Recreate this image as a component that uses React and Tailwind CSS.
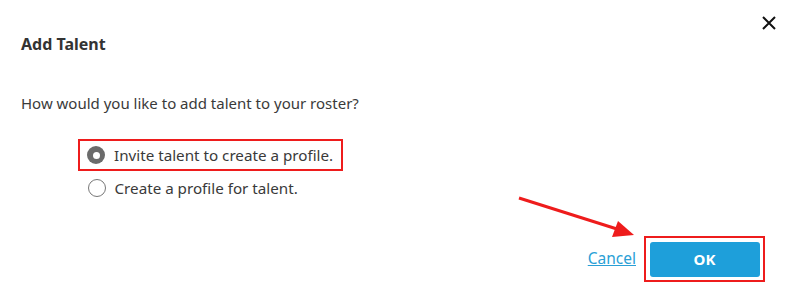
import React from "react";

export default function App() {
  return (
    <div
      className="relative w-[787px] h-[286px] bg-white text-[#3a3a3a] overflow-hidden"
      style={{ fontFamily: "'Noto Sans', sans-serif" }}
    >
      <div className="flex flex-col pl-[21px] pr-[22px] pt-[33px]">
        <div className="flex justify-between items-start">
          <h2 className="text-[16px] leading-[22px] font-bold text-[#333]">Add Talent</h2>
          <button className="-mt-[19px] -mr-[13px] w-[18px] h-[18px] flex items-center justify-center">
            <svg width="14" height="14" viewBox="0 0 14 14">
              <path d="M1 1 L13 13 M13 1 L1 13" stroke="#111" strokeWidth="2" />
            </svg>
          </button>
        </div>
        <p className="mt-[38px] text-[15px] leading-[20px]">How would you like to add talent to your roster?</p>
        <div className="mt-[26px] ml-[57px] flex flex-col">
          <label className="self-start flex items-center gap-[9px] h-[32px] pl-[7px] pr-[8px] border-[2.5px] border-[#ee1c1c] text-[15.2px]">
            <span className="w-[18px] h-[18px] rounded-full bg-[#6b6b6b] flex items-center justify-center">
              <span className="w-[7px] h-[7px] rounded-full bg-white" />
            </span>
            Invite talent to create a profile.
          </label>
          <label className="self-start flex items-center gap-[9px] h-[34px] pl-[9.5px] text-[15.2px]">
            <span className="w-[18px] h-[18px] rounded-full border border-[#777] bg-white" />
            Create a profile for talent.
          </label>
        </div>
        <div className="mt-[31px] flex justify-end items-center gap-[8px]">
          <a className="text-[15.5px] text-[#2a9fd6] underline">Cancel</a>
          <div className="border-[2.5px] border-[#ee1c1c] p-[3.5px]">
            <button className="w-[110px] h-[35px] rounded-[3px] bg-[#1e9fda] text-white font-bold text-[15px]">
              OK
            </button>
          </div>
        </div>
      </div>
      <svg className="absolute left-0 top-0 pointer-events-none" width="787" height="286">
        <line x1="519" y1="198" x2="617" y2="229" stroke="#ee1c1c" strokeWidth="3" />
        <polygon points="634,235 612,237 618,221" fill="#ee1c1c" />
      </svg>
    </div>
  );
}
